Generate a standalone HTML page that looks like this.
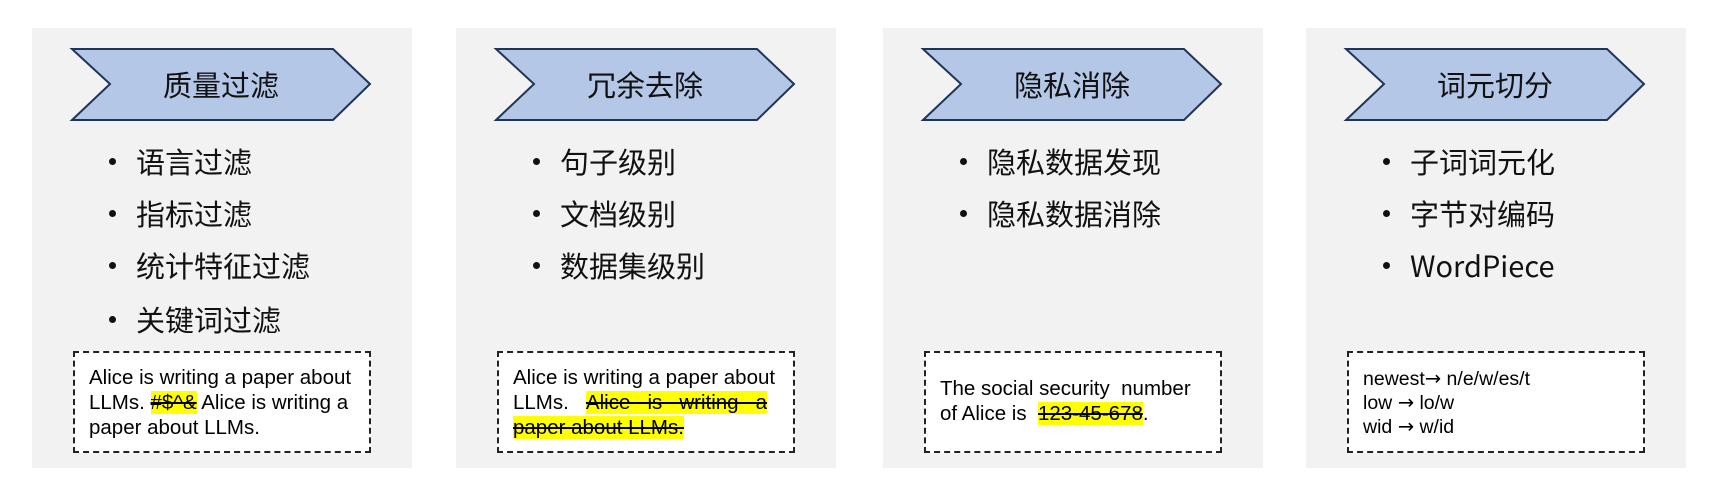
<!DOCTYPE html>
<html><head><meta charset="utf-8"><style>
body{margin:0;width:1726px;height:495px;background:#fff;position:relative;overflow:hidden;font-family:"Liberation Sans","Noto Sans CJK SC",sans-serif}
.p{position:absolute;top:28px;width:380px;height:440px;background:#f2f2f2}
.p svg{position:absolute;left:0;top:0}
.t{position:absolute;left:40px;width:298px;top:34px;text-align:center;font-size:29px;line-height:44px;color:#111;font-family:"Noto Sans CJK SC",sans-serif}
.li{position:absolute;left:104px;font-size:29px;line-height:40px;color:#111;font-family:"Noto Sans CJK SC","Liberation Sans",sans-serif;white-space:nowrap}
.li:before{content:"";position:absolute;left:-27px;top:17px;width:7px;height:7px;border-radius:50%;background:#111}
.box{position:absolute;left:41px;top:323px;width:298px;height:102px;border:2px dashed #222;background:#fff;box-sizing:border-box}
.bt{position:absolute;left:14px;font-size:20.5px;line-height:25px;color:#000;white-space:nowrap}
.hl{background:#ffff00;text-decoration:line-through}
.ar{font-family:"DejaVu Sans",sans-serif}
</style></head><body>

<div class="p" style="left:32px">
<svg width="380" height="120"><polygon points="40,21 301,21 338,56 301,92 40,92 78,56" fill="#b4c7e7" stroke="#1f3557" stroke-width="2"/></svg>
<div class="t">质量过滤</div>
<div class="li" style="top:113px">语言过滤</div>
<div class="li" style="top:165px">指标过滤</div>
<div class="li" style="top:217px">统计特征过滤</div>
<div class="li" style="top:271px">关键词过滤</div>
<div class="box"><div class="bt" style="top:12px">Alice is writing a paper about<br>LLMs. <span class="hl">#$^&amp;</span> Alice is writing a<br>paper about LLMs.</div></div>
</div>

<div class="p" style="left:456px">
<svg width="380" height="120"><polygon points="40,21 301,21 338,56 301,92 40,92 78,56" fill="#b4c7e7" stroke="#1f3557" stroke-width="2"/></svg>
<div class="t">冗余去除</div>
<div class="li" style="top:113px">句子级别</div>
<div class="li" style="top:165px">文档级别</div>
<div class="li" style="top:217px">数据集级别</div>
<div class="box"><div class="bt" style="top:12px">Alice is writing a paper about<br>LLMs. &nbsp;&nbsp;<span class="hl">Alice &nbsp; is &nbsp; writing &nbsp; a</span><br><span class="hl">paper about LLMs.</span></div></div>
</div>

<div class="p" style="left:883px">
<svg width="380" height="120"><polygon points="40,21 301,21 338,56 301,92 40,92 78,56" fill="#b4c7e7" stroke="#1f3557" stroke-width="2"/></svg>
<div class="t">隐私消除</div>
<div class="li" style="top:113px">隐私数据发现</div>
<div class="li" style="top:165px">隐私数据消除</div>
<div class="box"><div class="bt" style="top:23px">The social security &nbsp;number<br>of Alice is &nbsp;<span class="hl">123-45-678</span>.</div></div>
</div>

<div class="p" style="left:1306px">
<svg width="380" height="120"><polygon points="40,21 301,21 338,56 301,92 40,92 78,56" fill="#b4c7e7" stroke="#1f3557" stroke-width="2"/></svg>
<div class="t">词元切分</div>
<div class="li" style="top:113px">子词词元化</div>
<div class="li" style="top:165px">字节对编码</div>
<div class="li" style="top:217px">WordPiece</div>
<div class="box"><div class="bt" style="top:14px;font-size:19.5px;line-height:24px">newest<span class="ar">→</span> n/e/w/es/t<br>low <span class="ar">→</span> lo/w<br>wid <span class="ar">→</span> w/id</div></div>
</div>

</body></html>
